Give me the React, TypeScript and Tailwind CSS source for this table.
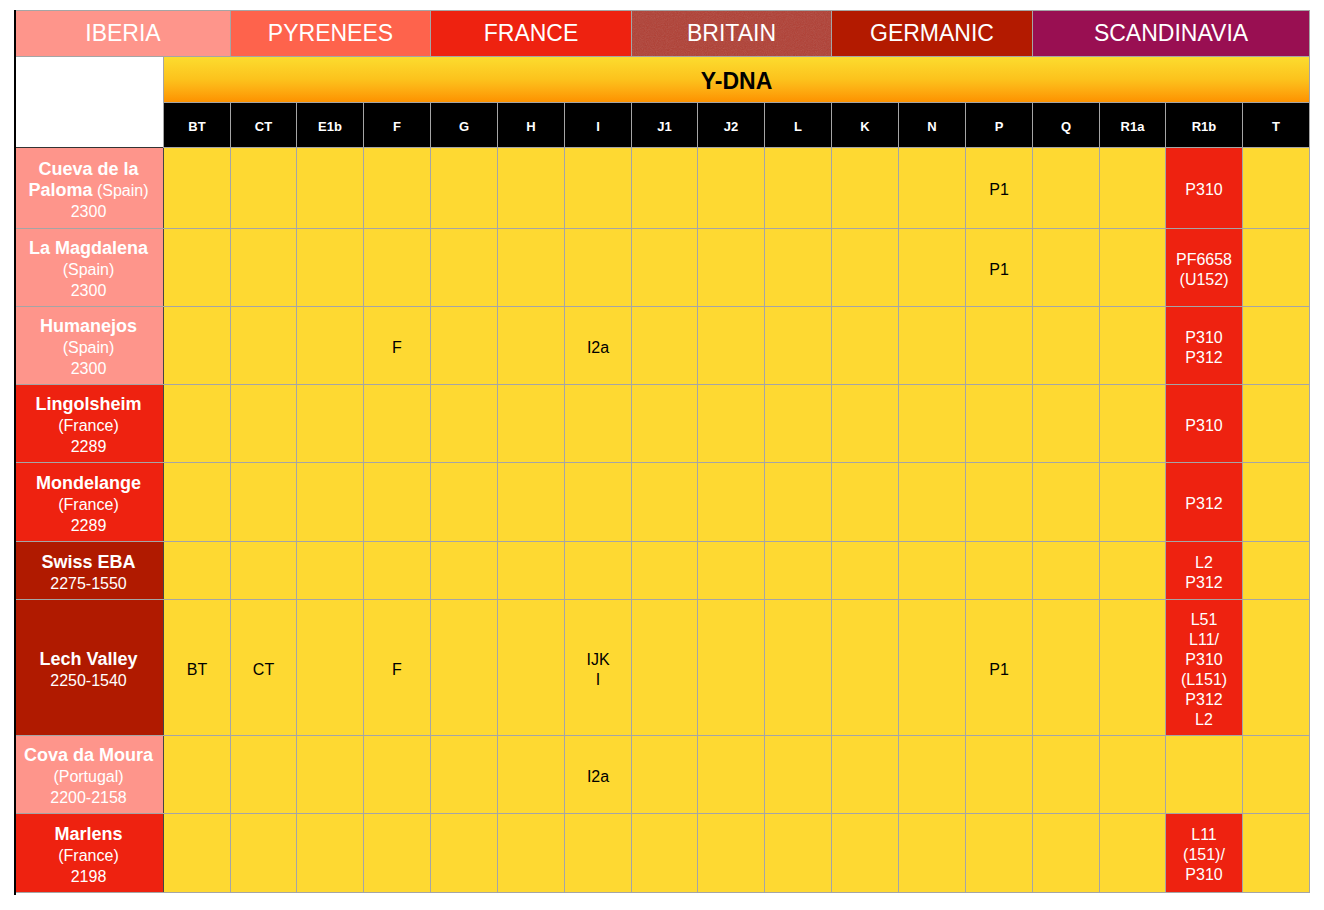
import type { ReactNode } from "react";

const HAPLOGROUPS = ["BT", "CT", "E1b", "F", "G", "H", "I", "J1", "J2", "L", "K", "N", "P", "Q", "R1a", "R1b", "T"];

const SALMON = "bg-[#fe958b]";
const RED = "bg-[#ee2210]";
const DARK = "bg-[#b01a00]";

interface Row {
  bg: string;
  label: ReactNode;
  cells: Record<string, string[]>;
  r1bRed: boolean;
}

const Name = ({ children }: { children: ReactNode }) => (
  <span className="font-bold text-[18px]">{children}</span>
);

const rows: Row[] = [
  {
    bg: SALMON,
    label: (
      <>
        <div><Name>Cueva de la</Name></div>
        <div><Name>Paloma</Name> (Spain)</div>
        <div>2300</div>
      </>
    ),
    cells: { P: ["P1"], R1b: ["P310"] },
    r1bRed: true,
  },
  {
    bg: SALMON,
    label: (
      <>
        <div><Name>La Magdalena</Name></div>
        <div>(Spain)</div>
        <div>2300</div>
      </>
    ),
    cells: { P: ["P1"], R1b: ["PF6658", "(U152)"] },
    r1bRed: true,
  },
  {
    bg: SALMON,
    label: (
      <>
        <div><Name>Humanejos</Name></div>
        <div>(Spain)</div>
        <div>2300</div>
      </>
    ),
    cells: { F: ["F"], I: ["I2a"], R1b: ["P310", "P312"] },
    r1bRed: true,
  },
  {
    bg: RED,
    label: (
      <>
        <div><Name>Lingolsheim</Name></div>
        <div>(France)</div>
        <div>2289</div>
      </>
    ),
    cells: { R1b: ["P310"] },
    r1bRed: true,
  },
  {
    bg: RED,
    label: (
      <>
        <div><Name>Mondelange</Name></div>
        <div>(France)</div>
        <div>2289</div>
      </>
    ),
    cells: { R1b: ["P312"] },
    r1bRed: true,
  },
  {
    bg: DARK,
    label: (
      <>
        <div><Name>Swiss EBA</Name></div>
        <div>2275-1550</div>
      </>
    ),
    cells: { R1b: ["L2", "P312"] },
    r1bRed: true,
  },
  {
    bg: DARK,
    label: (
      <>
        <div><Name>Lech Valley</Name></div>
        <div>2250-1540</div>
      </>
    ),
    cells: {
      BT: ["BT"],
      CT: ["CT"],
      F: ["F"],
      I: ["IJK", "I"],
      P: ["P1"],
      R1b: ["L51", "L11/", "P310", "(L151)", "P312", "L2"],
    },
    r1bRed: true,
  },
  {
    bg: SALMON,
    label: (
      <>
        <div><Name>Cova da Moura</Name></div>
        <div>(Portugal)</div>
        <div>2200-2158</div>
      </>
    ),
    cells: { I: ["I2a"] },
    r1bRed: false,
  },
  {
    bg: RED,
    label: (
      <>
        <div><Name>Marlens</Name></div>
        <div>(France)</div>
        <div>2198</div>
      </>
    ),
    cells: { R1b: ["L11", "(151)/", "P310"] },
    r1bRed: true,
  },
];

function Region({ label, bg, span, grain }: { label: string; bg: string; span: string; grain?: boolean }) {
  return (
    <div className={`${span} ${bg} relative overflow-hidden flex items-center justify-center text-white text-[23px]`}>
      {grain && (
        // felt-like texture on the Britain header
        <svg className="absolute inset-0 w-full h-full opacity-[0.18]" aria-hidden>
          <filter id="grain">
            <feTurbulence type="fractalNoise" baseFrequency="0.9" numOctaves="2" stitchTiles="stitch" />
            <feColorMatrix type="saturate" values="0" />
          </filter>
          <rect width="100%" height="100%" filter="url(#grain)" />
        </svg>
      )}
      <span className="relative">{label}</span>
    </div>
  );
}

export default function App() {
  return (
    <div className="bg-white min-h-screen pt-[10px] pl-[14px] font-[Liberation_Sans,Arial,sans-serif]">
      <div className="w-fit border-l-2 border-black pb-[2px]">
        <div className="grid gap-px bg-[#a5a5a5] border-t border-r border-b border-[#a5a5a5] grid-cols-[147px_66px_65px_66px_66px_66px_66px_66px_65px_66px_66px_66px_66px_66px_66px_65px_76px_66px] grid-rows-[45px_45px_44px_80px_77px_77px_77px_78px_57px_135px_77px_78px]">
          <Region label="IBERIA" bg="bg-[#fe958b]" span="col-span-2" />
          <Region label="PYRENEES" bg="bg-[#fe634c]" span="col-span-3" />
          <Region label="FRANCE" bg="bg-[#ee2210]" span="col-span-3" />
          <Region label="BRITAIN" bg="bg-[#b03e33]" span="col-span-3" grain />
          <Region label="GERMANIC" bg="bg-[#b31a00]" span="col-span-3" />
          <Region label="SCANDINAVIA" bg="bg-[#990f52]" span="col-span-4" />

          <div className="row-span-2 bg-white shadow-[0_1px_0_#333]" />
          <div className="col-span-17 bg-gradient-to-b from-[#fcdc2e] via-[#fcc21c] to-[#fd9200] flex items-center justify-center pt-1 text-[23px] font-bold text-black">
            Y-DNA
          </div>

          {HAPLOGROUPS.map((h) => (
            <div key={h} className="bg-black text-white font-bold text-[13px] flex items-center justify-center pt-1">
              {h}
            </div>
          ))}

          {rows.map((row, i) => (
            <Row key={i} row={row} />
          ))}
        </div>
      </div>
    </div>
  );
}

function Row({ row }: { row: Row }) {
  return (
    <>
      <div className={`${row.bg} shadow-[1px_0_0_#444] text-white text-[16px] leading-[21px] pt-[4px] pr-[2px] flex flex-col items-center justify-center text-center`}>
        {row.label}
      </div>
      {HAPLOGROUPS.map((h) => {
        const lines = row.cells[h] ?? [];
        const red = h === "R1b" && row.r1bRed;
        return (
          <div
            key={h}
            className={`flex flex-col items-center justify-center text-center text-[16px] leading-5 pt-[4px] ${
              red ? "bg-[#ee2210] text-white" : "bg-[#fed932] text-black"
            }`}
          >
            {lines.map((l, j) => (
              <div key={j}>{l}</div>
            ))}
          </div>
        );
      })}
    </>
  );
}
